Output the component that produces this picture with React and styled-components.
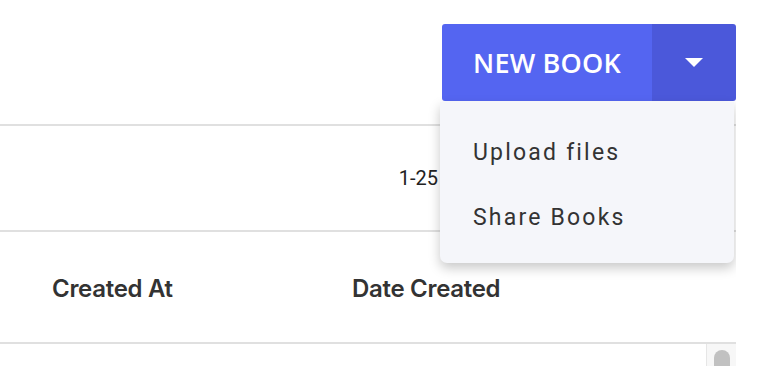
import styled, { createGlobalStyle } from 'styled-components';

const GlobalStyle = createGlobalStyle`
  body {
    margin: 0;
    background: #ffffff;
    font-family: Roboto, "Liberation Sans", sans-serif;
    overflow: hidden;
  }
`;

const Page = styled.div`
  width: 736px;
  height: 366px;
  overflow: hidden;
`;

const Toolbar = styled.div`
  height: 126px;
  padding-top: 24px;
  box-sizing: border-box;
  display: flex;
  justify-content: flex-end;
  align-items: flex-start;
  border-bottom: 2px solid #e0e0e0;
`;

const SplitButton = styled.div`
  position: relative;
  display: flex;
  height: 77px;
  border-radius: 3px;
  z-index: 2;
`;

const MainButton = styled.button`
  width: 210px;
  border: 0;
  border-radius: 3px 0 0 3px;
  background: #5465f1;
  color: #ffffff;
  font-family: "Open Sans", sans-serif;
  font-weight: 600;
  font-size: 27px;
  letter-spacing: 0.2px;
  padding: 0;
  cursor: pointer;
`;

const CaretButton = styled.button`
  width: 84px;
  border: 0;
  border-radius: 0 3px 3px 0;
  background: #4b58da;
  display: flex;
  align-items: center;
  justify-content: center;
  padding: 0;
  cursor: pointer;
`;

const Menu = styled.ul`
  position: absolute;
  top: calc(100% + 1px);
  left: -2px;
  width: 294px;
  margin: 0;
  padding: 18px 0 13px;
  list-style: none;
  background: #f5f6fa;
  border-radius: 0 0 7px 7px;
  box-shadow: 0 5px 12px rgba(0, 0, 0, 0.22);
`;

const MenuItem = styled.li`
  height: 65px;
  display: flex;
  align-items: center;
  padding-left: 33px;
  font-family: Roboto, sans-serif;
  font-size: 23px;
  letter-spacing: 2.2px;
  color: #333333;
`;

const PaginationRow = styled.div`
  height: 106px;
  box-sizing: border-box;
  display: flex;
  align-items: center;
  justify-content: flex-end;
  padding-right: 40px;
  border-bottom: 2px solid #e0e0e0;
  font-family: Roboto, sans-serif;
  font-size: 20px;
  color: #222222;
`;

const PageLabel = styled.span`
  margin-right: 116px;
`;

const PageArrow = styled.span`
  display: flex;
  width: 40px;
  justify-content: center;
  color: #757575;
`;

const HeaderRow = styled.div`
  height: 112px;
  box-sizing: border-box;
  display: grid;
  grid-template-columns: 300px 300px 1fr;
  align-items: center;
  padding-left: 52px;
  border-bottom: 2px solid #e0e0e0;
`;

const HeaderCell = styled.div`
  font-family: Inter, sans-serif;
  font-weight: 600;
  font-size: 24px;
  letter-spacing: -0.3px;
  color: #333333;
  padding-top: 2px;
`;

const Body = styled.div`
  display: flex;
  height: 40px;
`;

const Rows = styled.div`
  flex: 1;
`;

const ScrollTrack = styled.div`
  width: 29px;
  border-left: 1px solid #e6e6e6;
  background: #f7f7f7;
  display: flex;
  justify-content: center;
  padding-top: 6px;
`;

const ScrollThumb = styled.div`
  width: 16px;
  height: 60px;
  border-radius: 8px;
  background: #c1c1c1;
`;

const Caret = () => (
  <svg width="18" height="9" viewBox="0 0 18 9">
    <path d="M0 0 L18 0 L9 9 Z" fill="#ffffff" />
  </svg>
);

const Chevron = ({ flip }) => (
  <svg width="24" height="24" viewBox="0 0 24 24" style={{ transform: flip ? 'scaleX(-1)' : 'none' }}>
    <path d="M15.4 7.4 14 6l-6 6 6 6 1.4-1.4L10.8 12z" fill="currentColor" />
  </svg>
);

export default function App() {
  return (
    <>
      <GlobalStyle />
      <Page>
        <Toolbar>
          <SplitButton>
            <MainButton>NEW BOOK</MainButton>
            <CaretButton>
              <Caret />
            </CaretButton>
            <Menu>
              <MenuItem>Upload files</MenuItem>
              <MenuItem>Share Books</MenuItem>
            </Menu>
          </SplitButton>
        </Toolbar>
        <PaginationRow>
          <PageLabel>1-25 of 120</PageLabel>
          <PageArrow><Chevron /></PageArrow>
          <PageArrow><Chevron flip /></PageArrow>
        </PaginationRow>
        <HeaderRow>
          <HeaderCell>Created At</HeaderCell>
          <HeaderCell>Date Created</HeaderCell>
        </HeaderRow>
        <Body>
          <Rows />
          <ScrollTrack>
            <ScrollThumb />
          </ScrollTrack>
        </Body>
      </Page>
    </>
  );
}
